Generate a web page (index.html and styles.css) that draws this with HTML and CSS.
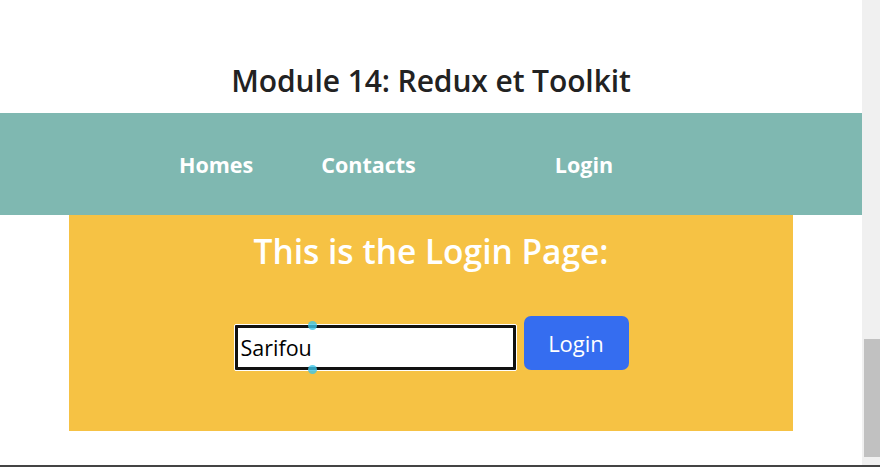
FILE: index.html
```html
<!DOCTYPE html>
<html lang="fr">
<head>
<meta charset="utf-8">
<title>Module 14</title>
<link rel="stylesheet" href="styles.css">
</head>
<body>
<div class="page">
  <h1 class="title">Module 14: Redux et Toolkit</h1>
  <nav class="nav">
    <a class="nav-link" href="#">Homes</a>
    <a class="nav-link nav-contacts" href="#">Contacts</a>
    <a class="nav-link nav-login" href="#">Login</a>
  </nav>
  <main class="card">
    <h2 class="card-title">This is the Login Page:</h2>
    <form class="form">
      <div class="field">
        <input class="input" type="text" value="Sarifou">
        <span class="handle handle-top"></span>
        <span class="handle handle-bottom"></span>
      </div>
      <button class="btn" type="button">Login</button>
    </form>
  </main>
</div>
<div class="scrollbar"><div class="thumb"></div></div>
</body>
</html>
```

FILE: styles.css
```css
html, body {
  margin: 0;
  height: 100%;
}
body {
  display: flex;
  font-family: "Open Sans", "Noto Sans", sans-serif;
  background: #fff;
  overflow: hidden;
  border-bottom: 2px solid #444;
  box-sizing: border-box;
}
.page {
  flex: 1;
  display: flex;
  flex-direction: column;
  align-items: center;
}
.title {
  margin: 60px 0 0;
  height: 53px;
  font-size: 30px;
  font-weight: 600;
  letter-spacing: -0.1px;
  color: #222;
  line-height: 42px;
}
.nav {
  align-self: stretch;
  height: 102px;
  background: #7fb8b1;
  display: flex;
  align-items: center;
  padding-left: 179px;
}
.nav-link {
  color: #fff;
  text-decoration: none;
  font-weight: 700;
  font-size: 21.5px;
}
.nav-contacts {
  margin-left: 68px;
}
.nav-login {
  margin-left: 139px;
}
.card {
  width: 724px;
  height: 216px;
  background: #f6c244;
  display: flex;
  flex-direction: column;
  align-items: center;
}
.card-title {
  margin: 13px 0 0;
  font-size: 33.5px;
  font-weight: 600;
  color: #fff;
  line-height: 46px;
}
.form {
  margin-top: 42px;
  display: flex;
  align-items: flex-start;
  gap: 7px;
}
.field {
  position: relative;
  display: flex;
  margin-top: 8px;
}
.input {
  width: 283px;
  height: 47px;
  box-sizing: border-box;
  border: 1px solid #fff;
  outline: 3px solid #111;
  outline-offset: -4px;
  border-radius: 2px;
  padding: 0 6px;
  font-family: inherit;
  font-size: 21.5px;
  color: #000;
  background: #fff;
}
.handle {
  position: absolute;
  left: 74px;
  width: 9px;
  height: 9px;
  border-radius: 50%;
  background: #3ec6e8;
  opacity: 0.8;
}
.handle-top { top: -3px; }
.handle-bottom { bottom: -3px; }
.btn {
  width: 105px;
  height: 54px;
  background: #356df0;
  color: #fff;
  border: none;
  border-radius: 7px;
  font-family: inherit;
  font-size: 22px;
}
.scrollbar {
  width: 18px;
  background: #f0f0f0;
  display: flex;
  flex-direction: column;
  justify-content: flex-end;
  padding: 0 0 8px 2px;
  box-sizing: border-box;
}
.thumb {
  height: 118px;
  background: #c1c1c1;
}
```
